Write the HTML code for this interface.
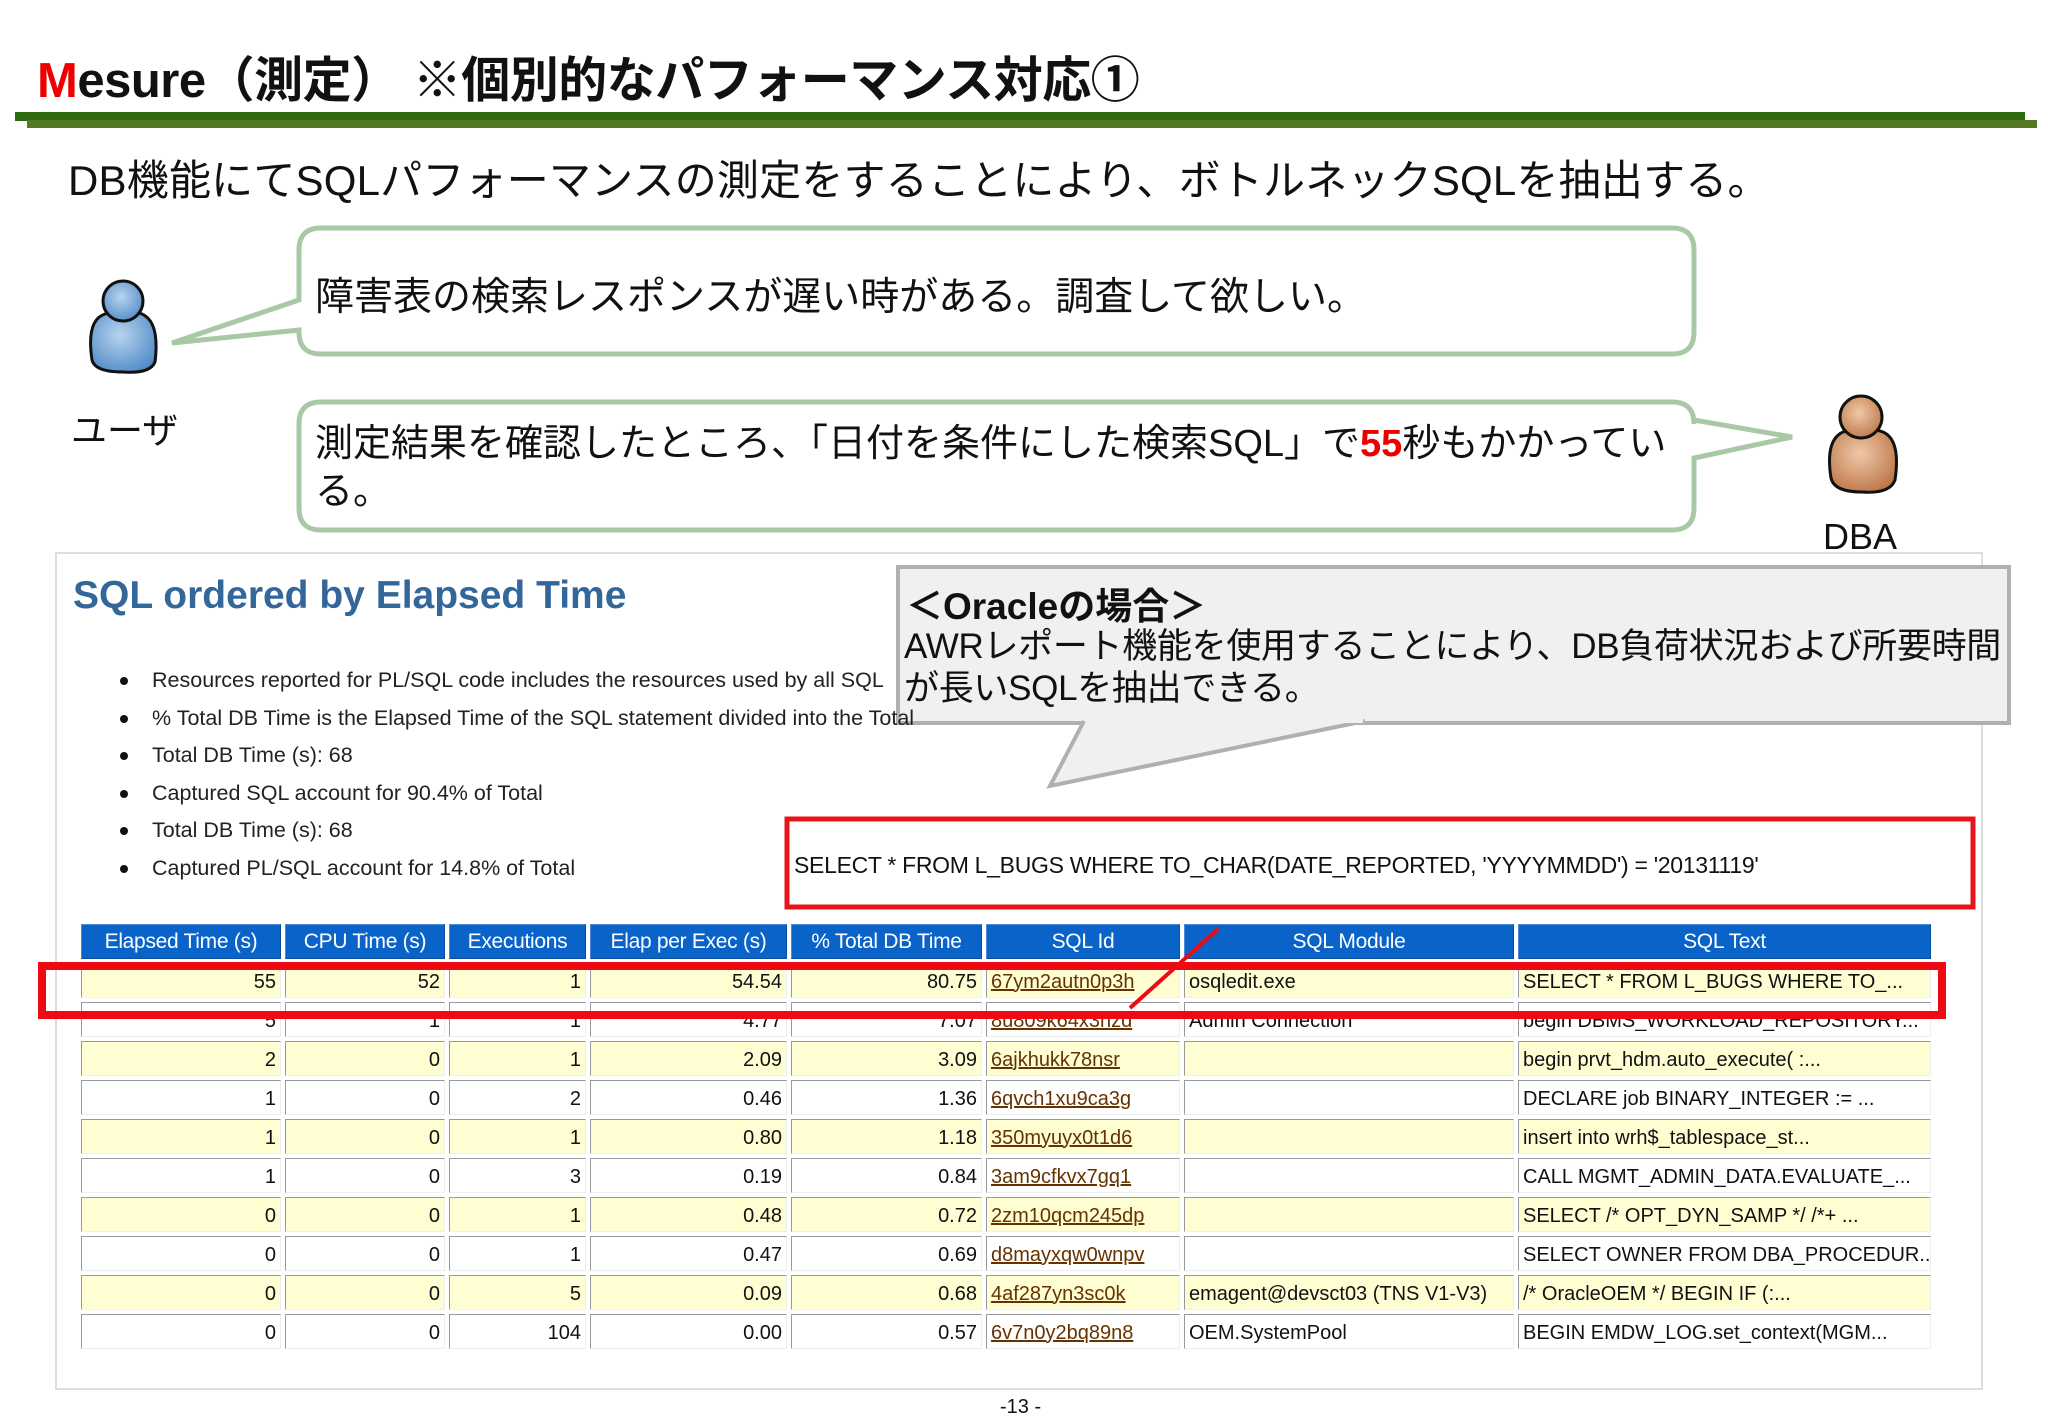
<!DOCTYPE html>
<html><head><meta charset="utf-8">
<style>
*{margin:0;padding:0;box-sizing:border-box}
body{width:2048px;height:1418px;background:#fff;position:relative;overflow:hidden;font-family:"Liberation Sans","Noto Sans CJK JP",sans-serif;color:#111}
.a{position:absolute;white-space:nowrap}
.bul{position:absolute;left:120px;font-size:21.5px;color:#222}
.bul:before{content:"";position:absolute;left:0;top:9px;width:8px;height:8px;border-radius:50%;background:#111}
.bul span{margin-left:32px}
table{position:absolute;left:77px;top:920px;border-collapse:separate;border-spacing:4px 4px;font-size:20px;table-layout:fixed;width:1858px}
td,th{height:35px;padding:0 4px;border:1px solid;border-color:#999 #eee #eee #999;white-space:nowrap;overflow:hidden}
td{padding-top:3px}
th{background:#0a63c9;color:#fff;font-weight:normal;border-color:#4d89d8 #0a4ea0 #0a4ea0 #4d89d8;font-size:21px;letter-spacing:-0.3px}
td{text-align:right}
td.l{text-align:left}
td.id{text-align:left;color:#663300;text-decoration:underline}
tr.y td{background:#fffdd2}
</style></head><body>
<div class="a" style="left:37px;top:41px;font-size:49px;font-weight:bold;color:#111;letter-spacing:-0.5px"><span style="color:#e00">M</span>esure（測定） ※個別的なパフォーマンス対応①</div>
<div class="a" style="left:15px;top:112px;width:2010px;height:9px;background:#2f6a10"></div>
<div class="a" style="left:27px;top:120px;width:2010px;height:8px;background:#567a24"></div>
<div class="a" style="left:68px;top:147px;font-size:42px;letter-spacing:0.2px">DB機能にてSQLパフォーマンスの測定をすることにより、ボトルネックSQLを抽出する。</div>

<svg class="a" style="left:0;top:0" width="2048" height="1418">
<path d="M321,228 H1672 Q1694,228 1694,250 V332 Q1694,354 1672,354 H321 Q299,354 299,332 V330 L172,343 L299,300 V250 Q299,228 321,228 Z" fill="#fff" stroke="#a9c8a6" stroke-width="5"/>
<path d="M321,402 H1672 Q1694,402 1694,424 V420 L1792,437 L1694,458 V508 Q1694,530 1672,530 H321 Q299,530 299,508 V424 Q299,402 321,402 Z" fill="#fff" stroke="#a9c8a6" stroke-width="5"/>
<rect x="56" y="553" width="1926" height="836" fill="#fff" stroke="#ddd" stroke-width="2"/>
<defs>
<radialGradient id="gb" cx="0.45" cy="0.4" r="0.7"><stop offset="0" stop-color="#b8d4ee"/><stop offset="1" stop-color="#4a86c4"/></radialGradient>
<radialGradient id="go" cx="0.45" cy="0.4" r="0.7"><stop offset="0" stop-color="#f0c8a8"/><stop offset="1" stop-color="#b87040"/></radialGradient>
</defs>
<path d="M92,360 Q86,320 105,314 Q123,306 142,314 Q160,322 155,362 Q150,374 123,372 Q95,372 92,360 Z" fill="url(#gb)" stroke="#111" stroke-width="3"/>
<circle cx="123" cy="301" r="20" fill="url(#gb)" stroke="#111" stroke-width="3"/>
<path d="M1831,478 Q1825,440 1843,432 Q1862,424 1883,432 Q1901,440 1895,480 Q1890,494 1862,492 Q1834,492 1831,478 Z" fill="url(#go)" stroke="#111" stroke-width="3"/>
<circle cx="1861" cy="417" r="21" fill="url(#go)" stroke="#111" stroke-width="3"/>
<rect x="898" y="567" width="1111" height="156" fill="#eff1ee" stroke="#b0b0b0" stroke-width="4"/>
<path d="M1084,721 L1050,786 L1365,721" fill="#eff1ee" stroke="#b0b0b0" stroke-width="4"/>
<rect x="1086" y="715" width="277" height="8" fill="#eff1ee"/>
<rect x="787" y="819" width="1186" height="88" fill="none" stroke="#e8141c" stroke-width="5"/>
</svg>

<div class="a" style="left:315px;top:266px;font-size:39px">障害表の検索レスポンスが遅い時がある。調査して欲しい。</div>
<div class="a" style="left:71px;top:402px;font-size:36px">ユーザ</div>
<div class="a" style="left:315px;top:420px;font-size:38px;line-height:48px">測定結果を確認したところ、「日付を条件にした検索SQL」で<span style="color:#e00;font-weight:bold">55</span>秒もかかってい<br>る。</div>
<div class="a" style="left:1823px;top:516px;font-size:36px">DBA</div>

<div class="a" style="left:73px;top:574px;font-size:39px;font-weight:bold;color:#336699">SQL ordered by Elapsed Time</div>
<div class="bul" style="top:668px"><span>Resources reported for PL/SQL code includes the resources used by all SQL</span></div>
<div class="bul" style="top:706px"><span>% Total DB Time is the Elapsed Time of the SQL statement divided into the Total</span></div>
<div class="bul" style="top:743px"><span>Total DB Time (s): 68</span></div>
<div class="bul" style="top:781px"><span>Captured SQL account for 90.4% of Total</span></div>
<div class="bul" style="top:818px"><span>Total DB Time (s): 68</span></div>
<div class="bul" style="top:856px"><span>Captured PL/SQL account for 14.8% of Total</span></div>

<div class="a" style="left:906px;top:576px;font-size:37px;font-weight:bold">＜Oracleの場合＞</div>
<div class="a" style="left:904px;top:626px;font-size:35px;line-height:42px;letter-spacing:-0.3px">AWRレポート機能を使用することにより、DB負荷状況および所要時間<br>が長いSQLを抽出できる。</div>

<div class="a" style="left:794px;top:852px;font-size:23px;letter-spacing:-0.3px">SELECT * FROM L_BUGS WHERE TO_CHAR(DATE_REPORTED, 'YYYYMMDD') = '20131119'</div>

<table>
<colgroup><col style="width:200px"><col style="width:160px"><col style="width:137px"><col style="width:197px"><col style="width:191px"><col style="width:194px"><col style="width:330px"><col style="width:413px"></colgroup>
<tr><th>Elapsed Time (s)</th><th>CPU Time (s)</th><th>Executions</th><th>Elap per Exec (s)</th><th>% Total DB Time</th><th>SQL Id</th><th>SQL Module</th><th>SQL Text</th></tr>
<tr class="y"><td>55</td><td>52</td><td>1</td><td>54.54</td><td>80.75</td><td class="id">67ym2autn0p3h</td><td class="l">osqledit.exe</td><td class="l">SELECT * FROM L_BUGS WHERE TO_...</td></tr>
<tr><td>5</td><td>1</td><td>1</td><td>4.77</td><td>7.07</td><td class="id">8u809k64x3nzd</td><td class="l">Admin Connection</td><td class="l">begin DBMS_WORKLOAD_REPOSITORY...</td></tr>
<tr class="y"><td>2</td><td>0</td><td>1</td><td>2.09</td><td>3.09</td><td class="id">6ajkhukk78nsr</td><td class="l"></td><td class="l">begin prvt_hdm.auto_execute( :...</td></tr>
<tr><td>1</td><td>0</td><td>2</td><td>0.46</td><td>1.36</td><td class="id">6qvch1xu9ca3g</td><td class="l"></td><td class="l">DECLARE job BINARY_INTEGER := ...</td></tr>
<tr class="y"><td>1</td><td>0</td><td>1</td><td>0.80</td><td>1.18</td><td class="id">350myuyx0t1d6</td><td class="l"></td><td class="l">insert into wrh$_tablespace_st...</td></tr>
<tr><td>1</td><td>0</td><td>3</td><td>0.19</td><td>0.84</td><td class="id">3am9cfkvx7gq1</td><td class="l"></td><td class="l">CALL MGMT_ADMIN_DATA.EVALUATE_...</td></tr>
<tr class="y"><td>0</td><td>0</td><td>1</td><td>0.48</td><td>0.72</td><td class="id">2zm10qcm245dp</td><td class="l"></td><td class="l">SELECT /* OPT_DYN_SAMP */ /*+ ...</td></tr>
<tr><td>0</td><td>0</td><td>1</td><td>0.47</td><td>0.69</td><td class="id">d8mayxqw0wnpv</td><td class="l"></td><td class="l">SELECT OWNER FROM DBA_PROCEDUR...</td></tr>
<tr class="y"><td>0</td><td>0</td><td>5</td><td>0.09</td><td>0.68</td><td class="id">4af287yn3sc0k</td><td class="l">emagent@devsct03 (TNS V1-V3)</td><td class="l">/* OracleOEM */ BEGIN IF (:...</td></tr>
<tr><td>0</td><td>0</td><td>104</td><td>0.00</td><td>0.57</td><td class="id">6v7n0y2bq89n8</td><td class="l">OEM.SystemPool</td><td class="l">BEGIN EMDW_LOG.set_context(MGM...</td></tr>
</table>

<svg class="a" style="left:0;top:0" width="2048" height="1418">
<rect x="42" y="966" width="1900" height="49" fill="none" stroke="#ee0a12" stroke-width="8"/>
<line x1="1218" y1="929" x2="1130" y2="1008" stroke="#ee0a12" stroke-width="4"/>
</svg>
<div class="a" style="left:1000px;top:1396px;font-size:20px">-13 -</div>
</body></html>
